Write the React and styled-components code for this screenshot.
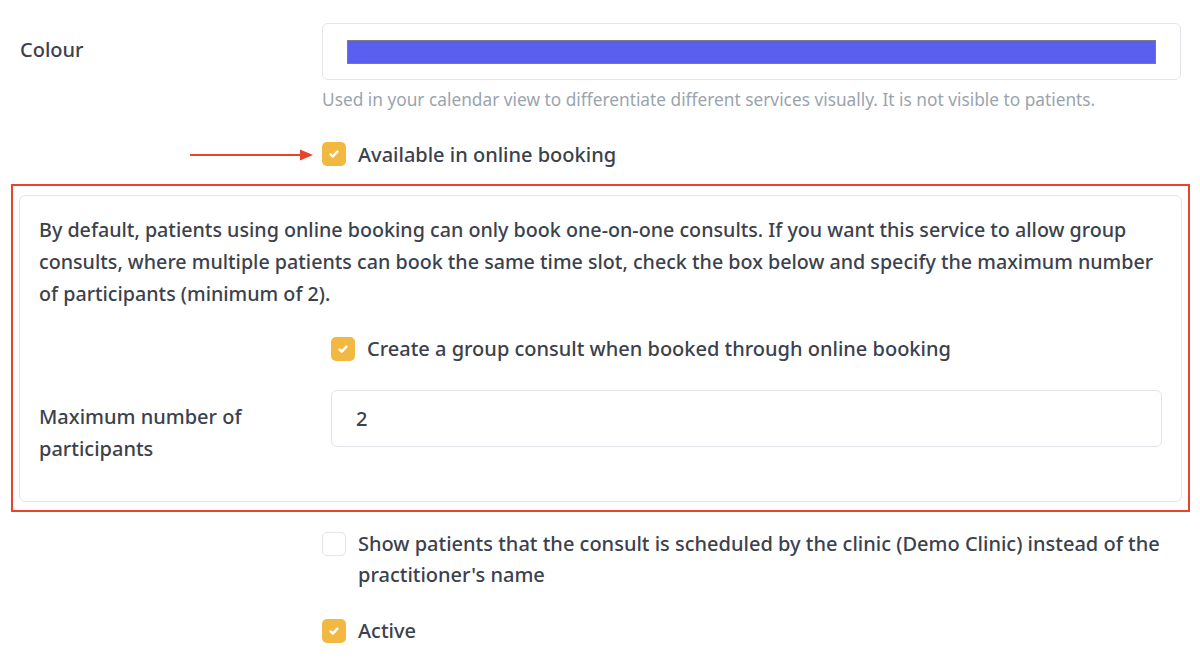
import React from 'react';
import styled, { createGlobalStyle } from 'styled-components';

const GlobalStyle = createGlobalStyle`
  html, body {
    margin: 0;
    padding: 0;
    background: #fff;
  }
  body {
    font-family: 'Noto Sans', 'Lato', sans-serif;
    color: #3b414d;
  }
`;

const Page = styled.div`
  width: 1200px;
  padding: 23px 19px 0 20px;
  box-sizing: border-box;
`;

const FormRow = styled.div`
  display: grid;
  grid-template-columns: ${(p) => p.labelWidth || '302px'} 1fr;
  align-items: start;
`;

const Label = styled.div`
  font-size: 20px;
  font-weight: 500;
  line-height: 32px;
  padding-top: ${(p) => p.top || '11px'};
  padding-right: 20px;
`;

const Field = styled.div`
  display: flex;
  flex-direction: column;
`;

const InputBox = styled.div`
  height: 57px;
  border: 1px solid #e2e5e9;
  border-radius: 6px;
  box-sizing: border-box;
  display: flex;
  align-items: center;
  padding: 0 24px;
  font-size: 20px;
  font-weight: 500;
  color: #3b414d;
`;

const Swatch = styled.div`
  flex: 1;
  height: 24px;
  background: #5b5fef;
  border: 1px solid #7a7c86;
  box-sizing: border-box;
`;

const Help = styled.div`
  font-size: 17.3px;
  color: #9aa4ae;
  margin-top: 9px;
  line-height: 22px;
`;

const Spacer = styled.div`
  height: ${(p) => p.h}px;
`;

const CheckRow = styled.label`
  display: flex;
  align-items: flex-start;
  gap: 12px;
  font-size: 20px;
  font-weight: 500;
  line-height: 31px;
  margin-left: ${(p) => p.indent || '302px'};
  position: relative;
`;

const Box = styled.span`
  flex: 0 0 24px;
  width: 24px;
  height: 24px;
  margin-top: 3.5px;
  border-radius: 5px;
  box-sizing: border-box;
  display: flex;
  align-items: center;
  justify-content: center;
  background: ${(p) => (p.checked ? '#f2b942' : '#fff')};
  border: ${(p) => (p.checked ? 'none' : '1.5px solid #e2e5e9')};
`;

const Arrow = styled.svg`
  position: absolute;
  left: -132px;
  top: 9px;
`;

const Highlight = styled.div`
  margin: 0 0 0 -9px;
  width: 1179px;
  box-sizing: border-box;
  border: 2.5px solid #e8432d;
  padding: 8.5px 6px 8px 6px;
`;

const Card = styled.div`
  border: 1px solid #e2e5e9;
  border-radius: 6px;
  padding: 18px 19px 36px 19px;
`;

const Intro = styled.p`
  margin: 0;
  font-size: 19.7px;
  font-weight: 500;
  line-height: 32px;
`;

function Check({ checked }) {
  return (
    <Box checked={checked}>
      {checked && (
        <svg width="12" height="12" viewBox="0 0 12 12">
          <path d="M2.6 6.4l2.2 2.2 4.6-5" fill="none" stroke="#fff" strokeWidth="2.4" strokeLinecap="round" strokeLinejoin="round" />
        </svg>
      )}
    </Box>
  );
}

export default function App() {
  return (
    <>
      <GlobalStyle />
      <Page>
        <FormRow>
          <Label>Colour</Label>
          <Field>
            <InputBox>
              <Swatch />
            </InputBox>
            <Help>Used in your calendar view to differentiate different services visually. It is not visible to patients.</Help>
          </Field>
        </FormRow>

        <Spacer h={27.5} />
        <CheckRow>
          <Arrow width="124" height="14" viewBox="0 0 124 14">
            <line x1="0" y1="7" x2="112" y2="7" stroke="#e8432d" strokeWidth="2" />
            <path d="M110 1.5 L123 7 L110 12.5 Z" fill="#e8432d" />
          </Arrow>
          <Check checked />
          <span>Available in online booking</span>
        </CheckRow>

        <Spacer h={14.5} />
        <Highlight>
          <Card>
            <Intro>
              By default, patients using online booking can only book one-on-one consults. If you want this service to allow group
              consults, where multiple patients can book the same time slot, check the box below and specify the maximum number
              of participants (minimum of 2).
            </Intro>
            <Spacer h={23.5} />
            <CheckRow indent="292px">
              <Check checked />
              <span>Create a group consult when booked through online booking</span>
            </CheckRow>
            <Spacer h={25.5} />
            <FormRow labelWidth="292px">
              <Label>Maximum number of participants</Label>
              <InputBox>2</InputBox>
            </FormRow>
          </Card>
        </Highlight>

        <Spacer h={16.5} />
        <CheckRow>
          <Check />
          <span>
            Show patients that the consult is scheduled by the clinic (Demo Clinic) instead of the practitioner's name
          </span>
        </CheckRow>
        <Spacer h={25} />
        <CheckRow>
          <Check checked />
          <span>Active</span>
        </CheckRow>
      </Page>
    </>
  );
}
